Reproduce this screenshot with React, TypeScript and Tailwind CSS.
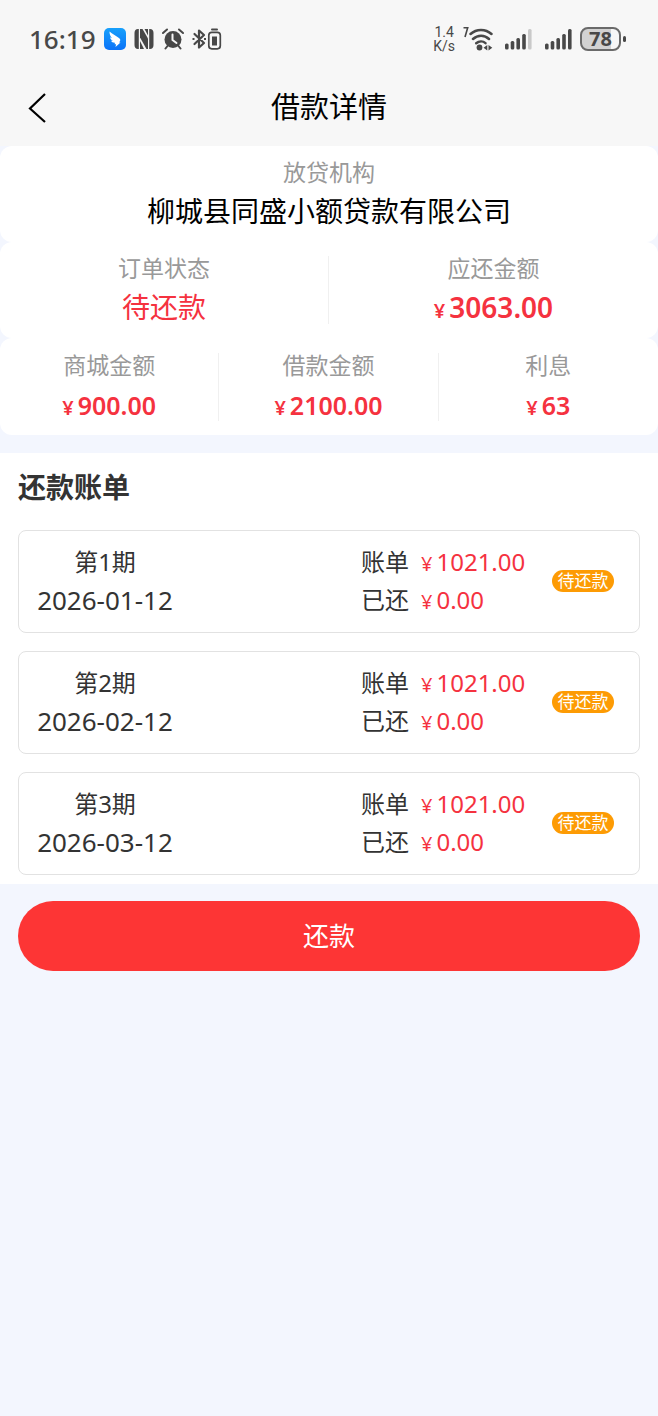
type Amount = {
  label: string,
  value: string
}

type Bill = {
  id: number,
  date: string,
  total: string,
  paid: string,
  status: string
}

const amounts: Array<Amount> = [
  {label: "商城金额", value: "900.00"},
  {label: "借款金额", value: "2100.00"},
  {label: "利息", value: "63"},
]

const bills: Array<Bill> = [
  {id: 1, date: "2026-01-12", total: "1021.00", paid: "0.00", status: "待还款"},
  {id: 2, date: "2026-02-12", total: "1021.00", paid: "0.00", status: "待还款"},
  {id: 3, date: "2026-03-12", total: "1021.00", paid: "0.00", status: "待还款"},
]

function DingIcon() {
  return (
    <svg width="22" height="22" viewBox="0 0 22 22" aria-hidden="true">
      <defs>
        <linearGradient id="ding" x1="0" y1="0" x2="0" y2="1">
          <stop offset="0" stopColor="#17a0fb" />
          <stop offset="1" stopColor="#0a72f8" />
        </linearGradient>
      </defs>
      <rect width="22" height="22" rx="5" fill="url(#ding)" />
      <path d="M5.500 3.500C8 6 13 8.300 15.300 10.200c1 .9 1.200 1.600.8 2.600l-.9 1.700h1.300L11.500 19l.6-2.800h-1.500l.4-1.500c-2 .1-3.400-.6-4-1.900l2 .1c-1.800-.9-2.800-2-3-3.600l2 1C6.300 8.300 5.400 6 5.500 3.500z" fill="#fff" />
    </svg>
  )
}

function NfcIcon() {
  return (
    <svg width="20" height="22" viewBox="0 0 20 22" fill="#484848" aria-hidden="true">
      <path d="M4 1h.8v20H4C1.800 21 .5 19.500.5 17V5C.5 2.500 1.800 1 4 1z" />
      <path d="M16 1h-.8v20h.8c2.200 0 3.500-1.500 3.500-4V5c0-2.500-1.300-4-3.500-4z" />
      <path d="M6 1h2.500l5.500 9.500V21h-1.500L6 9.500z" />
      <path d="M10.500 1H14v6.500zM6 13l4 8H6z" />
    </svg>
  )
}

function AlarmIcon() {
  return (
    <svg width="22" height="22" viewBox="0 0 22 22" aria-hidden="true">
      <circle cx="11" cy="11.500" r="8.500" fill="#484848" />
      <path d="M1 5l4-3.500M21 5l-4-3.500M5.500 18l-2 2.500M16.500 18l2 2.500" stroke="#484848" strokeWidth="2" strokeLinecap="round" />
      <path d="M10.500 6.500v5.500l4 3" fill="none" stroke="#f7f7f7" strokeWidth="2" strokeLinecap="round" strokeLinejoin="round" />
    </svg>
  )
}

function BluetoothIcon() {
  return (
    <svg width="30" height="24" viewBox="0 0 30 24" fill="none" stroke="#484848" aria-hidden="true">
      <path d="M2.500 7l9.500 9-5 4.500V3.500L12 8l-9.500 9" strokeWidth="2.200" strokeLinejoin="round" strokeLinecap="round" />
      <path d="M.5 12h2M12 12h2" strokeWidth="2.200" />
      <path d="M20 2.500h5" strokeWidth="2" strokeLinecap="round" />
      <rect x="16.800" y="5.300" width="11.500" height="16.500" rx="3" strokeWidth="1.700" />
      <rect x="20" y="9.500" width="5" height="9" fill="#484848" stroke="none" />
    </svg>
  )
}

function WifiIcon() {
  return (
    <svg width="30" height="26" viewBox="0 0 30 26" fill="none" stroke="#484848" aria-hidden="true">
      <path d="M.5 1.800h4.200L2 11" strokeWidth="1.600" />
      <path d="M7.500 8c6-5.500 15-5.500 21 0M10 13c4.800-4.500 11.500-4.500 16 0" strokeWidth="2.500" strokeLinecap="round" />
      <path d="M13.200 17.300c2.800-2.300 6.800-2.300 9.300-.2" strokeWidth="2.500" strokeLinecap="round" />
      <circle cx="16.500" cy="21.500" r="2.900" fill="#484848" stroke="none" />
      <path d="M24.300 19v5.500l-3.800-2.700zM25.500 19v5.500l3.800-2.700z" fill="#484848" stroke="none" />
    </svg>
  )
}

function SignalIcon({ weak }: { weak?: boolean }) {
  return (
    <svg width="27" height="22" viewBox="0 0 27 22" fill="#484848" aria-hidden="true">
      <rect x="0" y="15.500" width="3.600" height="6" rx="1.500" />
      <rect x="5.700" y="13" width="3.600" height="8.500" rx="1.500" />
      <rect x="11.400" y="10" width="3.600" height="11.500" rx="1.500" />
      <rect x="17.200" y="6" width="3.600" height="15.500" rx="1.500" />
      <rect x="23" y="1" width="3.600" height="20.500" rx="1.500" fill={weak ? "#c9c9c9" : "#484848"} />
    </svg>
  )
}

function StatusBar() {
  return (
    <div className="flex h-[72px] items-center justify-between pt-[6px] pr-8 pl-[29px] text-[#484848]">
      <div className="flex items-center">
        <span className="mr-2 text-[26px] leading-8 font-medium">16:19</span>
        <div className="flex items-center gap-2">
          <DingIcon />
          <NfcIcon />
          <AlarmIcon />
          <BluetoothIcon />
        </div>
      </div>
      <div className="flex items-center">
        <div className="mr-2 text-center font-[Roboto] text-sm leading-[14px]">
          <p>1.4</p>
          <p>K/s</p>
        </div>
        <WifiIcon />
        <div className="mr-2 ml-3 flex gap-[13px]">
          <SignalIcon weak />
          <SignalIcon />
        </div>
        <span className="flex h-6 w-[41px] items-center justify-center rounded-lg border-2 border-[#6a6a6a] bg-linear-to-r from-[#d2d2d2] from-78% to-[#f7f7f7] to-78% text-xl leading-5 font-bold">78</span>
        <span className="ml-[2px] h-[6px] w-[3px] rounded-full bg-[#484848]" />
      </div>
    </div>
  )
}

function Money({ value }: { value: string }) {
  return (
    <>
      <span className="mr-1 text-xl leading-6">¥</span>
      {value}
    </>
  )
}

function BillCard({ bill }: { bill: Bill }) {
  return (
    <li className="flex items-center rounded-lg border border-[#e2e2e2] pt-3 pr-[25px] pb-[13px] pl-[18px] text-2xl leading-[38px] text-[#333]">
      <div className="flex-1">
        <div className="w-[136px] text-center">
          <p>第{bill.id}期</p>
          <p className="text-[26px] leading-[38px] whitespace-nowrap">{bill.date}</p>
        </div>
      </div>
      <dl className="grid w-[191px] grid-cols-[auto_1fr] gap-x-3 whitespace-nowrap">
        <dt>账单</dt>
        <dd className="text-[#f5323f]"><Money value={bill.total} /></dd>
        <dt>已还</dt>
        <dd className="text-[#f5323f]"><Money value={bill.paid} /></dd>
      </dl>
      <span className="h-[22px] w-[62px] rounded-full bg-[#fd9b04] text-center text-[17px] leading-[21px] whitespace-nowrap text-white">{bill.status}</span>
    </li>
  )
}

function App() {
  return (
    <div className="min-h-screen bg-[#f3f6fe] font-['Noto_Sans','Noto_Sans_CJK_SC',sans-serif]">
      <div className="bg-[#f7f7f7]">
        <StatusBar />
        <header className="grid h-[74px] grid-cols-[1fr_auto_1fr] items-center pb-1">
          <button type="button" aria-label="返回" className="ml-6 w-fit cursor-pointer">
            <svg width="26" height="32" viewBox="0 0 26 32" fill="none" stroke="#000" strokeWidth="2.200">
              <path d="M21 3L6 17.500 21 31" />
            </svg>
          </button>
          <h1 className="text-[29px] leading-10 text-black">借款详情</h1>
        </header>
      </div>

      <main>
        <section className="h-24 rounded-xl bg-white pt-[10px] text-center">
          <p className="text-[23px] leading-8 text-[#999]">放贷机构</p>
          <p className="text-[28px] leading-[46px] text-black">柳城县同盛小额贷款有限公司</p>
        </section>

        <section className="grid h-24 grid-cols-2 items-center divide-x divide-[#f0f0f0] rounded-xl bg-white text-center">
          <div className="h-[68px]">
            <p className="-mt-1 text-[23px] leading-8 text-[#999]">订单状态</p>
            <p className="text-[28px] leading-[46px] text-[#f5323f]">待还款</p>
          </div>
          <div className="h-[68px]">
            <p className="-mt-1 text-[23px] leading-8 text-[#999]">应还金额</p>
            <p className="text-[28px] leading-[46px] font-semibold text-[#f5323f]"><Money value="3063.00" /></p>
          </div>
        </section>

        <section className="grid h-[97px] grid-cols-3 items-center divide-x divide-[#f0f0f0] rounded-xl bg-white text-center">
          {amounts.map((amount) => (
            <div key={amount.label} className="h-[68px]">
              <p className="-mt-1 text-[23px] leading-8 text-[#999]">{amount.label}</p>
              <p className="text-[25px] leading-[48px] font-semibold text-[#f5323f]"><Money value={amount.value} /></p>
            </div>
          ))}
        </section>

        <section className="mt-[18px] bg-white px-[18px] pt-3 pb-[9px]">
          <h2 className="mb-[21px] text-[28px] leading-[44px] font-bold text-[#333]">还款账单</h2>
          <ul className="flex flex-col gap-[18px]">
            {bills.map((bill) => (
              <BillCard key={bill.id} bill={bill} />
            ))}
          </ul>
        </section>

        <div className="px-[18px] pt-[17px]">
          <button type="button" className="h-[70px] w-full cursor-pointer rounded-full bg-[#fd3535] text-[26px] leading-10 text-white">还款</button>
        </div>
      </main>
    </div>
  )
}

export default App
